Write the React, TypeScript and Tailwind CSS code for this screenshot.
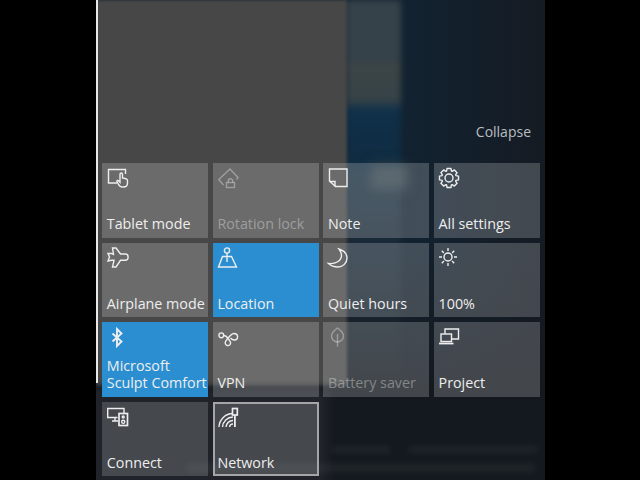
import React from "react";

const I = ({ children, sw = 1.4 }: { children: React.ReactNode; sw?: number }) => (
  <svg width={22} height={22} viewBox="0 0 22 22" fill="none" stroke="currentColor" strokeWidth={sw} className="overflow-visible">
    {children}
  </svg>
);

function gearPath() {
  const n = 8;
  const pts: string[] = [];
  for (let i = 0; i < n; i++) {
    const a = (i * 2 * Math.PI) / n;
    const seg = [
      [-0.34, 7.3],
      [-0.2, 9.7],
      [0.2, 9.7],
      [0.34, 7.3],
    ];
    for (const [d, r] of seg) {
      pts.push(`${(10 + r * Math.sin(a + d)).toFixed(2)} ${(10 - r * Math.cos(a + d)).toFixed(2)}`);
    }
  }
  return `M${pts.join("L")}Z`;
}

const icons: Record<string, React.ReactNode> = {
  tablet: (
    <I>
      <path d="M10 15H1.500V1.500H18.500V6" />
      <path d="M13 9V6.300c0-1.700 2.500-1.700 2.500 0V10l3.500.7c1 .2 1.500 1 1.500 2V15c0 2.500-1.500 4-4 4h-1.500c-1.500 0-2.500-1-3.500-2.500L10 13.500c-.5-1 1-1.500 1.500-.8l1.500 1.500V9" />
    </I>
  ),
  rotation: (
    <I>
      <path d="M5.500 17L.800 11.500 12 1l8 8.500-1.500 2" />
      <rect x="8.500" y="14.500" width="8" height="5" />
      <path d="M10.300 14.500v-1.500a2.200 2.200 0 0 1 4.400 0v1.500" />
    </I>
  ),
  note: (
    <I>
      <path d="M1.500 1H19V18.500H7.500L1.500 13Z" />
      <path d="M1.500 13.500H7V18.500" />
    </I>
  ),
  settings: (
    <I>
      <path d={gearPath()} strokeLinejoin="round" />
      <circle cx="10" cy="10" r="4" />
    </I>
  ),
  plane: (
    <I>
      <path d="M1 5.500h3.500L6.500 6.300 5.500 0H9l4.500 6h5c3.500 0 3.500 6.300 0 6.300h-5L9 19H5.500l1.500-6.700H4.500L1 13l1.500-4Z" />
    </I>
  ),
  location: (
    <I>
      <circle cx="9" cy="2.500" r="2.600" />
      <path d="M9 5V14" />
      <path d="M4.500 8.500H13.500L18.500 19H.500Z" />
    </I>
  ),
  moon: (
    <I>
      <path d="M11 1c4.500 1.500 8 4.500 8 9 0 5-4 9-9 9-4 0-7.500-1.500-9.500-3.500 7 1 13-3 13-8 0-2.500-1-4.500-2.500-6.500Z" />
    </I>
  ),
  sun: (
    <I>
      <circle cx="9" cy="9" r="4" />
      <path d="M0 9H3M15 9H18M9 0V3M9 15V18M2.800 2.800l2.100 2.100M13.100 13.100l2.100 2.100M2.800 15.200l2.100-2.100M13.100 4.900l2.100-2.100" />
    </I>
  ),
  bluetooth: (
    <I sw={1.9}>
      <path d="M5.500 6.500l9 8-4.500 4.500V2l4.500 4.500-9 8" />
    </I>
  ),
  vpn: (
    <I>
      <circle cx="3.300" cy="8.300" r="2.400" />
      <path d="M5.800 8.500c2.700 0 3.700 2 4.700 3.500l1.300 2a2.700 2.700 0 1 1-4.600 2c0-2 2-4 3.800-6 1.500-1.500 2.800-3.500 4.800-3.500 2.400 0 3.800 1.500 3.800 3.300s-1.400 3.200-3.300 3.200c-1.500 0-2.500-.5-3.800-2" />
    </I>
  ),
  leaf: (
    <I>
      <path d="M9.500 1c3.500 2.500 6 4.500 6 8s-3 6-6 6-6-2.500-6-6 2.500-5.500 6-8Z" />
      <path d="M9.500 7V19.500" />
    </I>
  ),
  project: (
    <I>
      <path d="M6 7V2H19.500V12H12.500" />
      <rect x="2" y="7" width="10.500" height="7.500" />
      <path d="M0 16.500H14.500" strokeWidth="1.800" />
    </I>
  ),
  connect: (
    <I>
      <path d="M10.500 10.500H.700V1.500H17V6" />
      <path d="M5 14H11M8 10.500V14" />
      <rect x="12" y="6.500" width="8.500" height="12" strokeWidth="1.700" />
      <circle cx="16.200" cy="10" r="1" />
      <circle cx="16.200" cy="14.800" r="1.600" />
    </I>
  ),
  network: (
    <I>
      <path d="M1 20A14 14 0 0 1 15 6.500" />
      <path d="M4.500 20A10.500 10.500 0 0 1 15 10" />
      <path d="M8 20A7 7 0 0 1 15 13.500" />
      <path d="M11.500 20A3.500 3.500 0 0 1 15 17" />
      <rect x="14.500" y="1.500" width="4.800" height="6.500" strokeWidth="1.700" />
      <path d="M16.900 8V20" strokeWidth="1.800" />
    </I>
  ),
};

type T = { label: string; icon: string; on?: boolean; dim?: boolean; sel?: boolean; low?: boolean; lines?: string[] };

const tiles: T[] = [
  { label: "Tablet mode", icon: "tablet" },
  { label: "Rotation lock", icon: "rotation", dim: true },
  { label: "Note", icon: "note" },
  { label: "All settings", icon: "settings" },
  { label: "Airplane mode", icon: "plane" },
  { label: "Location", icon: "location", on: true },
  { label: "Quiet hours", icon: "moon" },
  { label: "100%", icon: "sun" },
  { label: "Microsoft Sculpt Comfort", icon: "bluetooth", on: true, lines: ["Microsoft", "Sculpt Comfort"] },
  { label: "VPN", icon: "vpn" },
  { label: "Battery saver", icon: "leaf", dim: true },
  { label: "Project", icon: "project" },
  { label: "Connect", icon: "connect", low: true },
  { label: "Network", icon: "network", sel: true, low: true },
];

function Tile({ t }: { t: T }) {
  return (
    <div
      className={`relative flex flex-col justify-between h-[74.5px] ${
        t.sel ? "border-2 border-[#a3a5a6] pl-[3px] pt-[3px] pb-[3px]" : "pl-[5px] pt-[5px] pb-[5px]"
      } ${t.on ? "bg-[#2a8ed1]" : t.low ? "bg-white/[0.17]" : "bg-white/20"} ${
        t.dim ? "text-white/35" : "text-[#eeeeee]"
      }`}
    >
      <div className="h-[22px]">{icons[t.icon]}</div>
      <div className="text-[14.3px] leading-[17.5px] whitespace-nowrap -ml-[0.5px]">
        {t.lines ? t.lines.map((l) => <div key={l}>{l}</div>) : t.label}
      </div>
    </div>
  );
}

export default function App() {
  return (
    <div className="w-[640px] h-[480px] bg-black overflow-hidden flex font-['Open_Sans','Noto_Sans',sans-serif]">
      <div className="relative ml-[96px] w-[449px] h-full bg-[#14191f] overflow-hidden flex flex-col justify-end items-start pl-[6.300px] pb-[4px]">
        {/* blurred desktop seen through the acrylic panel */}
        <div className="absolute inset-0 bg-[linear-gradient(90deg,#121f2a_0%,#122230_70%,#151b23_100%)]" />
        <div className="absolute inset-x-0 top-[240px] h-[160px] bg-[linear-gradient(180deg,transparent,#14191f)]" />
        <div className="absolute left-[250px] top-0 w-[55px] h-[395px] bg-[linear-gradient(180deg,#36424a_0px,#36424a_60px,#3c4546_66px,#364347_100px,#10304a_110px,#0f2c42_158px,#1a3040_175px,#1a2a38_240px,#182530_300px,#14191f_390px)] blur-[3px]" />
        <div className="absolute left-[275px] top-[165px] w-[36px] h-[24px] bg-[#33444c] blur-[6px]" />
        <div className="absolute left-0 top-0 w-[251px] h-[386px] bg-[#474747] blur-[1.500px]" />
        <div className="absolute inset-x-0 top-[380px] h-[100px] bg-[linear-gradient(90deg,#20242a_0px,#20242a_225px,#14191f_238px)] [mask-image:linear-gradient(180deg,transparent,black_14px)]" />
        <div className="absolute left-[235px] top-[446px] w-[60px] h-[7px] rounded-full bg-white/[0.05] blur-[3px]" />
        <div className="absolute left-[312px] top-[446px] w-[130px] h-[7px] rounded-full bg-white/[0.05] blur-[3px]" />
        <div className="absolute left-[90px] top-[464px] w-[350px] h-[8px] rounded-full bg-white/[0.05] blur-[3px]" />
        <div className="absolute left-0 top-0 w-[2px] h-[383px] bg-[#e8e8e8]" />

        <div className="relative self-end mr-[14px] mb-[22.500px] text-[14px] leading-[18px] text-[#b9bdc0]">Collapse</div>
        <div className="relative grid grid-cols-[repeat(4,105.9px)] gap-x-[4.700px] gap-y-[5px]">
          {tiles.map((t) => (
            <Tile key={t.label} t={t} />
          ))}
        </div>
      </div>
    </div>
  );
}
